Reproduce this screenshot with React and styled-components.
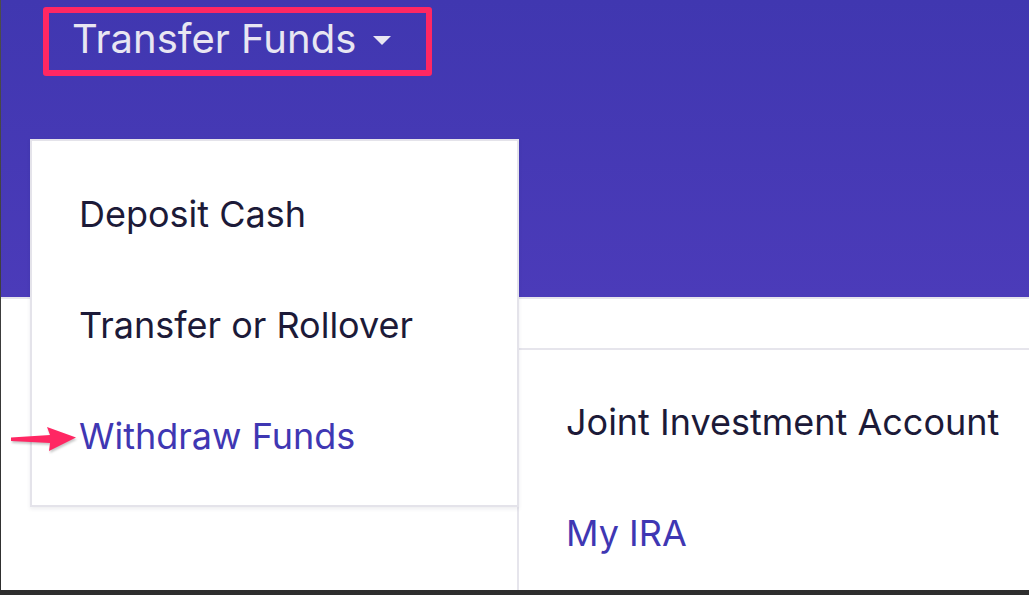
import React from 'react';
import styled, { createGlobalStyle } from 'styled-components';

const GlobalStyle = createGlobalStyle`
  * { box-sizing: border-box; }
  html, body { margin: 0; padding: 0; background: #3a3a3a; }
  body { font-family: 'Inter', 'Liberation Sans', sans-serif; }
`;

const Frame = styled.div`
  width: 1029px;
  height: 595px;
  padding: 0 0 5px 1px;
  background: linear-gradient(#4d4d4d, #2e2e2e);
  overflow: hidden;
`;

const Page = styled.div`
  position: relative;
  height: 590px;
  background: #fff;
  overflow: hidden;
`;

const Header = styled.header`
  height: 299px;
  padding: 7px 0 0 42px;
  background: linear-gradient(#4037b0, #4b3bb9);
  border-bottom: 2px solid #e6e5ec;
`;

const Trigger = styled.button`
  display: flex;
  align-items: center;
  gap: 17px;
  width: 389px;
  height: 69px;
  padding: 0 0 6px 23px;
  border: 6px solid #ff2763;
  border-radius: 3px;
  background: transparent;
  color: #e8e6f2;
  font-family: inherit;
  font-size: 40px;
  line-height: 50px;
  letter-spacing: 0;
  cursor: pointer;
`;

const Caret = styled.span`
  width: 0;
  height: 0;
  margin-top: 4px;
  border-left: 9px solid transparent;
  border-right: 9px solid transparent;
  border-top: 9px solid #e8e6f2;
`;

const Menu = styled.ul`
  position: absolute;
  left: 29px;
  top: 139px;
  width: 489px;
  height: 368px;
  margin: 0;
  padding: 18px 0 0 47px;
  list-style: none;
  background: #fff;
  border: 2px solid #e4e3ea;
  box-shadow: 0 2px 4px rgba(30, 25, 70, 0.08);
  z-index: 2;
`;

const Item = styled.li`
  height: 111px;
  font-size: 36px;
  line-height: 111px;
  letter-spacing: 0;
  white-space: nowrap;
  color: ${(p) => (p.active ? '#3f37b3' : '#1c1a38')};
`;

const Accounts = styled.ul`
  margin: 49px 0 0 516px;
  padding: 17px 0 0 47px;
  height: 300px;
  list-style: none;
  border-top: 2px solid #e6e5ec;
  border-left: 2px solid #e6e5ec;
`;

const Pointer = styled.svg`
  position: absolute;
  left: 8px;
  top: 422px;
  z-index: 3;
  filter: drop-shadow(1px 2px 1px rgba(0, 0, 0, 0.22));
`;

const App = () => {
  return (
    <Frame>
      <GlobalStyle />
      <Page>
        <Header>
          <Trigger>
            Transfer Funds
            <Caret />
          </Trigger>
        </Header>

        <Menu>
          <Item>Deposit Cash</Item>
          <Item>Transfer or Rollover</Item>
          <Item active>Withdraw Funds</Item>
        </Menu>

        <Pointer width="72" height="34" viewBox="0 0 72 34">
          <path d="M2 15.5 L41 13 L38 5 L67 15.5 L40 29 L41 21 L2 19 Z" fill="#ff2763" />
        </Pointer>

        <Accounts>
          <Item>Joint Investment Account</Item>
          <Item active>My IRA</Item>
        </Accounts>
      </Page>
    </Frame>
  );
};

export default App;
